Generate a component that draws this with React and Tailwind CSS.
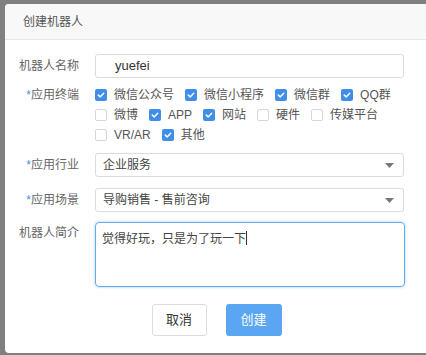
import React from "react";

const font = { fontFamily: '"Liberation Sans", "Noto Sans CJK SC", sans-serif' };

function Box({ checked }) {
  if (checked) {
    return (
      <span className="flex h-3 w-3 shrink-0 items-center justify-center rounded-[2px] bg-[#3f8ee9]">
        <svg width="8" height="8" viewBox="0 0 8 8" fill="none">
          <path d="M1.3 4.1 L3.2 5.9 L6.7 2.2" stroke="white" strokeWidth="1.5" strokeLinecap="round" strokeLinejoin="round" />
        </svg>
      </span>
    );
  }
  return <span className="h-3 w-3 shrink-0 rounded-[2px] border border-[#d3d7de] bg-white" />;
}

function Check({ label, checked }) {
  return (
    <div className="mr-[11px] flex h-5 items-center">
      <Box checked={checked} />
      <span className="ml-[7px] text-[12px] text-[#555]">{label}</span>
    </div>
  );
}

function Label({ children, req, className = "" }) {
  return (
    <div className={"w-[74px] shrink-0 text-right text-[12px] leading-5 text-[#666] " + className}>
      {req && <span className="text-[#4a8fe0]">*</span>}
      {children}
    </div>
  );
}

function Select({ value, className = "" }) {
  return (
    <div className={"flex h-6 w-[309px] items-center justify-between rounded-[3px] border border-[#dcdcdc] bg-white pl-[7px] pr-[9px] " + className}>
      <span className="text-[12px] text-[#444]">{value}</span>
      <svg width="9" height="5" viewBox="0 0 9 5">
        <path d="M0 0 H9 L4.5 5 Z" fill="#777" />
      </svg>
    </div>
  );
}

const items = [
  ["微信公众号", true],
  ["微信小程序", true],
  ["微信群", true],
  ["QQ群", true],
  ["微博", false],
  ["APP", true],
  ["网站", true],
  ["硬件", false],
  ["传媒平台", false],
  ["VR/AR", false],
  ["其他", true],
];

export default function App() {
  return (
    <div className="h-[355px] w-[426px] overflow-hidden bg-[#808080] pl-[5px] pt-[4px]" style={font}>
      <div className="h-[349px] w-[430px] overflow-hidden rounded-[4px] bg-white">
        <div className="flex h-[36px] items-center border-b border-[#e6e6e6] bg-[#f8f8f8] pl-[18px] text-[12px] text-[#555]">
          创建机器人
        </div>
        <div className="pt-[14px]">
          <div className="flex items-center">
            <Label>机器人名称</Label>
            <div className="ml-4 flex h-6 w-[309px] items-center rounded-[3px] border border-[#dcdcdc] pl-[19px] text-[13px] text-[#333]">
              yuefei
            </div>
          </div>
          <div className="mt-[7px] flex items-start">
            <Label req>应用终端</Label>
            <div className="ml-4 flex w-[311px] flex-wrap">
              {items.map(([l, c]) => (
                <Check key={l} label={l} checked={c} />
              ))}
            </div>
          </div>
          <div className="mt-[8px] flex items-center">
            <Label req>应用行业</Label>
            <Select value="企业服务" className="ml-4" />
          </div>
          <div className="mt-[11px] flex items-center">
            <Label req>应用场景</Label>
            <Select value="导购销售 - 售前咨询" className="ml-4" />
          </div>
          <div className="mt-[10px] flex items-start">
            <Label className="mt-px">机器人简介</Label>
            <div className="ml-4 h-[65px] w-[310px] rounded-[4px] border border-[#66aaf0] px-[6px] pt-[6px] text-[12px] leading-5 text-[#444] shadow-[0_0_3px_rgba(102,170,240,0.6)]">
              觉得好玩，只是为了玩一下<span className="inline-block h-[14px] w-px translate-y-[2px] bg-[#333]" />
            </div>
          </div>
          <div className="mt-[17px] flex justify-center gap-[19px] pr-[7px]">
            <div className="flex h-8 w-[55px] items-center justify-center rounded-[3px] border border-[#dddddd] bg-white text-[13px] text-[#333]">
              取消
            </div>
            <div className="flex h-8 w-[56px] items-center justify-center rounded-[3px] bg-[#5aa6f2] text-[13px] text-white">
              创建
            </div>
          </div>
        </div>
      </div>
    </div>
  );
}
